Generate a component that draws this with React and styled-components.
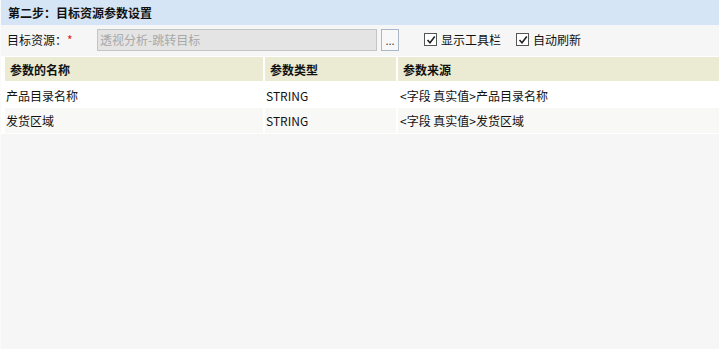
import React from 'react'
import styled, {createGlobalStyle} from 'styled-components'

const Global = createGlobalStyle`
  html, body {
    margin: 0;
    padding: 0;
    background: #f6f6f6;
  }
  body {
    font-family: "Noto Sans CJK SC", "Liberation Sans", sans-serif;
    font-size: 12px;
    color: #111;
  }
`

const Page = styled.div`
  width: 719px;
  height: 349px;
  background: #f6f6f6;
  display: flex;
  flex-direction: column;
  border-left: 1px solid #fafafa;
  box-sizing: border-box;
`

const Title = styled.div`
  height: 25px;
  background: #d5e5f5;
  display: flex;
  align-items: center;
  padding-left: 7px;
  font-weight: bold;
  font-size: 12px;
`

const Toolbar = styled.div`
  height: 29px;
  display: flex;
  align-items: center;
  padding-left: 6px;
`

const Label = styled.span`
  width: 90px;
  white-space: nowrap;
  display: flex;
  align-items: center;
`

const Star = styled.span`
  color: #e02020;
  margin-left: 0;
`

const Input = styled.div`
  width: 276px;
  height: 20px;
  box-sizing: content-box;
  border: 1px solid #c4c4c4;
  background: #e4e4e4;
  color: #a8a8a8;
  display: flex;
  align-items: center;
  padding-left: 2px;
`

const DotsButton = styled.button`
  margin-left: 4px;
  width: 18px;
  height: 22px;
  border: 1px solid #a9b7c6;
  background: #f8f8f8;
  padding: 0;
  font-size: 11px;
  color: #444;
  line-height: 16px;
  font-family: inherit;
`

const Check = styled.label`
  display: flex;
  align-items: center;
  gap: 4px;
  margin-left: ${p => p.$gap}px;
  white-space: nowrap;
`

const Box = styled.span`
  width: 11px;
  height: 11px;
  border: 1px solid #555;
  background: #fff;
  display: flex;
  align-items: center;
  justify-content: center;
`

const Table = styled.div`
  margin-top: 2px;
  background: #fff;
  padding: 1px 0 1px 4px;
  display: grid;
  grid-template-columns: 258px 131px 1fr;
  column-gap: 2px;
`

const HeadCell = styled.div`
  height: 24px;
  background: #ebebd3;
  font-weight: bold;
  display: flex;
  align-items: center;
  padding-left: 5px;
  margin-bottom: 2px;
`

const Cell = styled.div`
  height: 25px;
  background: ${p => (p.$odd ? '#f8f8f6' : '#fff')};
  display: flex;
  align-items: center;
  padding-left: ${p => p.$pad}px;
  white-space: nowrap;
`

const Tick = () => (
  <svg width="10" height="10" viewBox="0 0 10 10">
    <path d="M1.5 5 L4 7.8 L8.8 1.5" fill="none" stroke="#222" strokeWidth="1.6" />
  </svg>
)

const rows = [
  ['产品目录名称', 'STRING', '<字段 真实值>产品目录名称'],
  ['发货区域', 'STRING', '<字段 真实值>发货区域'],
]

export default function App() {
  return (
    <Page>
      <Global />
      <Title>第二步：目标资源参数设置</Title>
      <Toolbar>
        <Label>目标资源：<Star>*</Star></Label>
        <Input>透视分析-跳转目标</Input>
        <DotsButton>...</DotsButton>
        <Check $gap={25}><Box><Tick /></Box>显示工具栏</Check>
        <Check $gap={15}><Box><Tick /></Box>自动刷新</Check>
      </Toolbar>
      <Table>
        <HeadCell>参数的名称</HeadCell>
        <HeadCell>参数类型</HeadCell>
        <HeadCell>参数来源</HeadCell>
        {rows.map((r, i) => (
          <React.Fragment key={i}>
            <Cell $odd={i % 2 === 1} $pad={1}>{r[0]}</Cell>
            <Cell $odd={i % 2 === 1} $pad={1}>{r[1]}</Cell>
            <Cell $odd={i % 2 === 1} $pad={2}>{r[2]}</Cell>
          </React.Fragment>
        ))}
      </Table>
    </Page>
  )
}
